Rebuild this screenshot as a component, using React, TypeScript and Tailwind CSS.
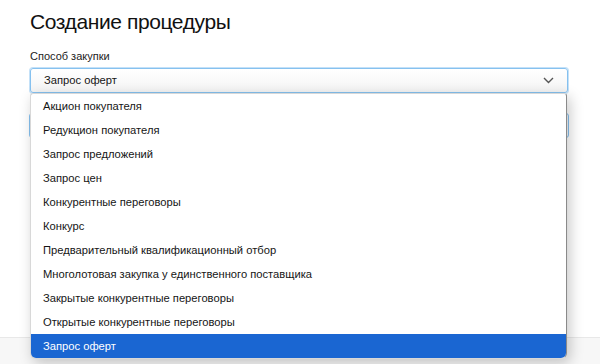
const options = [
  "Акцион покупателя",
  "Редукцион покупателя",
  "Запрос предложений",
  "Запрос цен",
  "Конкурентные переговоры",
  "Конкурс",
  "Предварительный квалификационный отбор",
  "Многолотовая закупка у единственного поставщика",
  "Закрытые конкурентные переговоры",
  "Открытые конкурентные переговоры",
  "Запрос оферт",
];

const selected = "Запрос оферт";

export default function App() {
  return (
    <div
      className="flex flex-col h-[364px] w-[600px] bg-white overflow-hidden"
      style={{ fontFamily: '"Liberation Sans", Arial, sans-serif' }}
    >
      <div className="flex-1 pl-[30px] pr-[32px] pt-[8px]">
        <h1 className="text-[21px] leading-[28px] tracking-[-0.4px] text-[#111]">Создание процедуры</h1>
        <div className="mt-[12px] text-[11px] leading-[16px] text-[#222]">Способ закупки</div>

        <div className="relative mt-[4px]">
          <div className="flex items-center justify-between h-[25px] pl-[13px] pr-[13px] rounded-[3px] border border-[#86c1ef] shadow-[0_0_0_1px_#c4e1f8] bg-gradient-to-b from-white to-[#f4f4f4] text-[11.2px] text-[#151515]">
            <span>{selected}</span>
            <svg width="11" height="7" viewBox="0 0 11 7" fill="none">
              <path d="M1 1l4.5 4.5L10 1" stroke="#555" strokeWidth="1.4" />
            </svg>
          </div>

          <div className="mt-[20px] h-[25px] mx-[-1px] rounded-[3px] border border-[#86c1ef] bg-[#f5f9fd]" />

          <div className="absolute left-0 right-[1px] top-[25px] z-10 bg-white rounded-t-[3px] rounded-b-[6px] border border-[#d8d8d8] border-r-[#8a8a8a] shadow-[3px_4px_14px_rgba(0,0,0,0.22)] overflow-hidden">
            {options.map((o) => (
              <div
                key={o}
                className={
                  o === selected
                    ? "h-[24px] flex items-center pl-[12px] text-[11.2px] text-white bg-[#1a66d2]"
                    : "h-[24px] flex items-center pl-[12px] text-[11.2px] text-[#151515]"
                }
              >
                {o}
              </div>
            ))}
          </div>
        </div>
      </div>
      <div className="h-[27px] border-t border-[#e8e8e8] bg-[#f7f7f7]" />
    </div>
  );
}
